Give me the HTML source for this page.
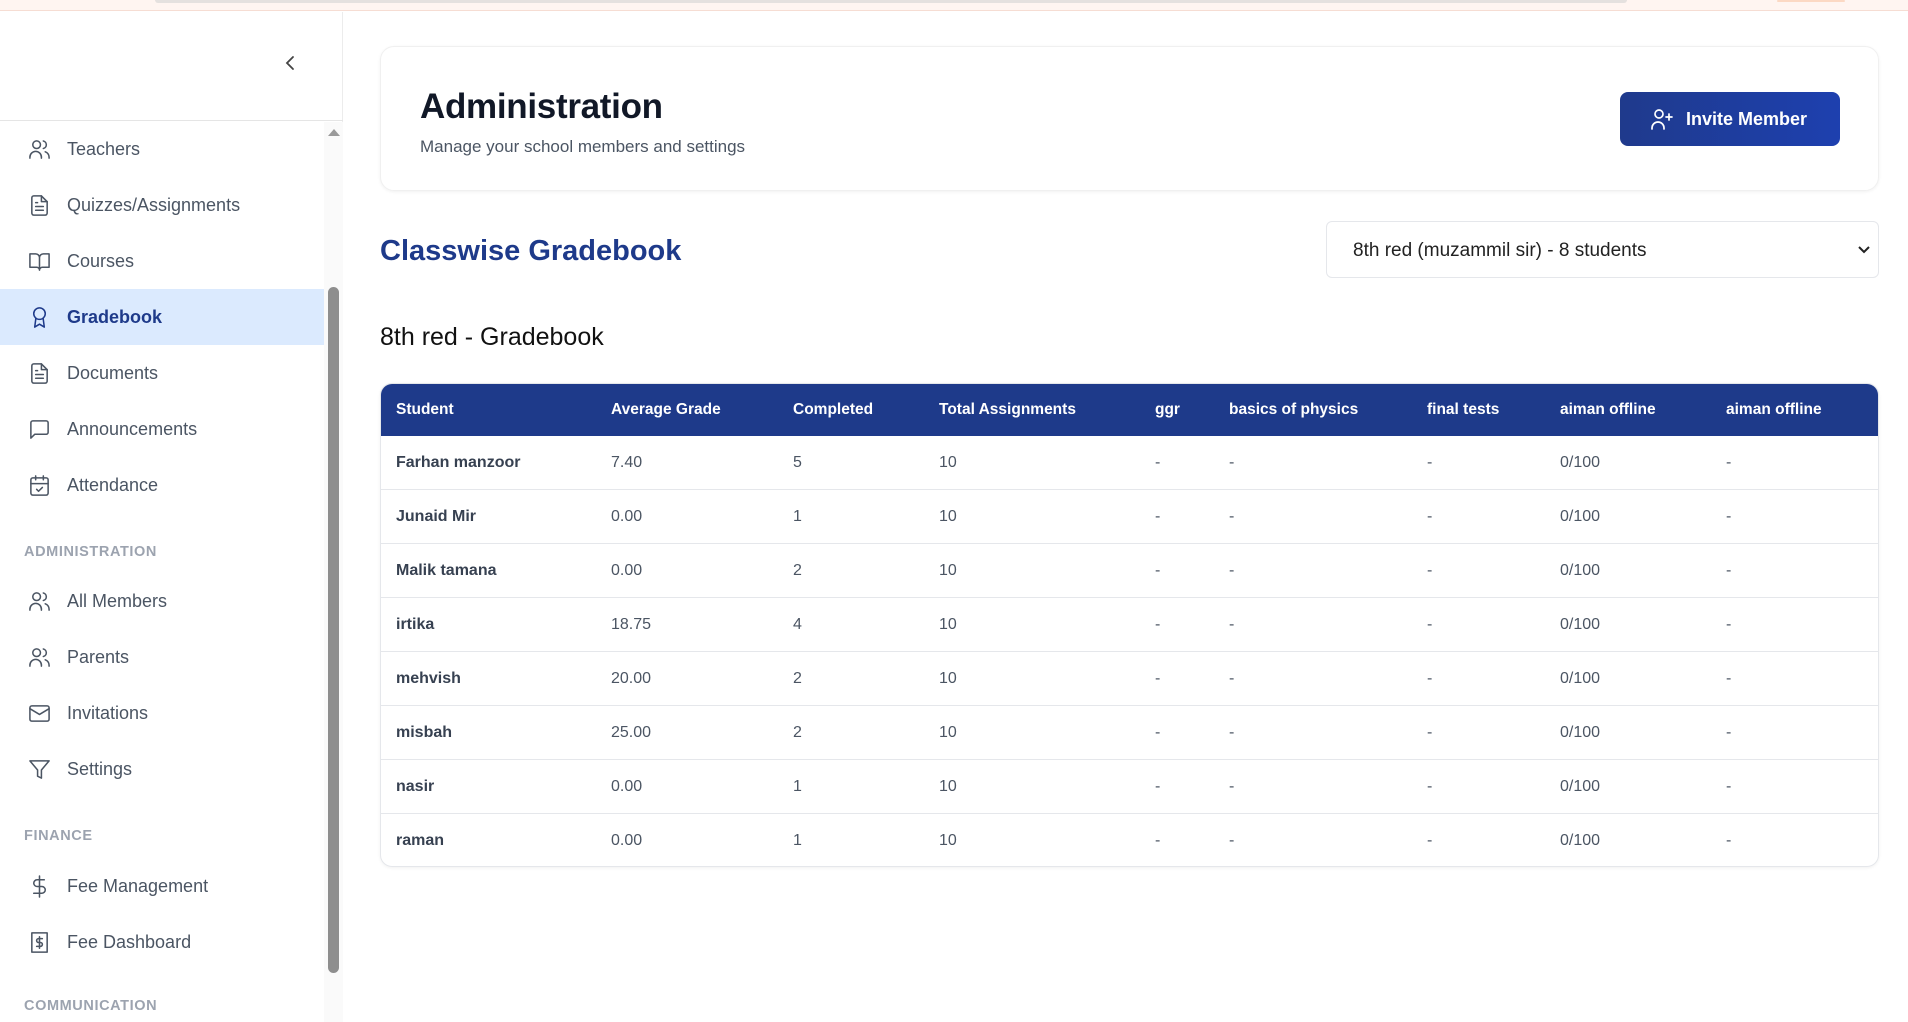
<!DOCTYPE html>
<html><head><meta charset="utf-8"><style>
*{box-sizing:border-box;margin:0;padding:0}
body{width:1908px;height:1012px;overflow:hidden;background:#fff;font-family:"Liberation Sans",sans-serif;position:relative}
.topbar{position:absolute;left:0;top:0;width:1908px;height:11px;background:#fff5f1;border-bottom:1px solid #f6ddd3}
.topbar .g{position:absolute;left:155px;top:0;width:1472px;height:3px;background:#e5e1df;border-radius:0 0 4px 4px}
.topbar .o{position:absolute;left:1777px;top:0;width:68px;height:2px;background:#fcd9c4;border-radius:2px}
.side{position:absolute;left:0;top:12px;width:343px;height:1000px;border-right:1px solid #ececec;background:#fff}
.side .hdr{position:absolute;left:0;top:0;width:343px;height:109px;border-bottom:1px solid #e5e5e5}
.side .strip{position:absolute;left:324px;top:110px;width:19px;height:900px;background:#fafafa}
.thumb{position:absolute;left:328px;top:275px;width:11px;height:686px;background:#8e8e8e;border-radius:6px}
.arrow{position:absolute;left:328px;top:117px;width:0;height:0;border-left:6px solid transparent;border-right:6px solid transparent;border-bottom:7px solid #9a9a9a}
.item{position:absolute;left:0;width:324px;height:56px;display:flex;align-items:center;color:#4b5563;font-size:18px}
.item svg{position:absolute;left:28px;width:23px;height:23px;fill:none;stroke:#4b5563;stroke-width:1.6;stroke-linecap:round;stroke-linejoin:round}
.item span{position:absolute;left:67px}
.item.act{background:#dbeafe;color:#1e3a8a}
.item.act svg{stroke:#1e3a8a}
.sec{position:absolute;left:24px;font-size:14.5px;font-weight:bold;color:#9ca3af;letter-spacing:0.6px}
.card{position:absolute;left:380px;top:46px;width:1499px;height:145px;border:1px solid #f0f0f0;border-radius:14px;box-shadow:0 1px 3px rgba(0,0,0,.06)}
.card h1{position:absolute;left:39px;top:40px;font-size:35px;font-weight:bold;color:#111827;letter-spacing:-0.3px}
.card p{position:absolute;left:39px;top:90px;font-size:17px;color:#4b5563}
.btn{position:absolute;left:1239px;top:45px;width:220px;height:54px;border-radius:8px;background:linear-gradient(90deg,#1f3a8c,#1e40af);color:#fff;font-size:18px;font-weight:bold}
.btn span{position:absolute;left:66px;top:17px}
.btn svg{position:absolute;left:30px;top:16px;width:24px;height:22px;fill:none;stroke:#fff;stroke-width:1.7;stroke-linecap:round}
h2{position:absolute;left:380px;top:235px;font-size:29px;font-weight:bold;color:#1e3a8a}
.sel{position:absolute;left:1326px;top:221px;width:553px;height:57px;border:1.5px solid #e5e7eb;border-radius:6px;font-size:19px;color:#222}
.sel span{position:absolute;left:26px;top:18px}
.sel svg{position:absolute;right:8px;top:23px;width:12px;height:10px;fill:none;stroke:#222;stroke-width:2}
h3{position:absolute;left:380px;top:323px;font-size:25px;font-weight:normal;color:#111}
.tbl{position:absolute;left:380px;top:383px;width:1499px;height:484px;border:1px solid #e5e7eb;border-radius:12px;overflow:hidden;box-shadow:0 1px 3px rgba(0,0,0,.06)}
.th{position:absolute;left:0;top:0;width:100%;height:52px;background:#1e3a8a}
.row{position:absolute;left:0;width:100%;height:54px;border-bottom:1px solid #e5e7eb}
.c{position:absolute;font-size:16px;top:0;line-height:52px;white-space:nowrap}
.th .c{color:#fff;font-weight:bold;font-size:15.5px}
.row .c{color:#4b5563;line-height:54px}
.row .c.n{font-weight:bold;color:#374151}
</style></head><body>
<div class="topbar"><div class="g"></div><div class="o"></div></div>
<div class="side">
<div class="hdr"><svg style="position:absolute;left:284px;top:43px" width="12" height="16" viewBox="0 0 12 16"><path d="M9 2L3 8l6 6" fill="none" stroke="#444" stroke-width="1.8" stroke-linecap="round"/></svg></div>
<div class="strip"></div><div class="arrow"></div><div class="thumb"></div>
</div>
<div class="item" style="top:121px"><svg viewBox="0 0 24 24"><circle cx="9" cy="7" r="4"/><path d="M2 21v-1a6 6 0 0 1 12 0v1M16 3.1a4 4 0 0 1 0 7.8M22 21v-1a6 6 0 0 0-4-5.6"/></svg><span>Teachers</span></div>
<div class="item" style="top:177px"><svg viewBox="0 0 24 24"><path d="M14 2H6a2 2 0 0 0-2 2v16a2 2 0 0 0 2 2h12a2 2 0 0 0 2-2V8z"/><path d="M14 2v6h6M8 13h8M8 17h8M8 9h2"/></svg><span>Quizzes/Assignments</span></div>
<div class="item" style="top:233px"><svg viewBox="0 0 24 24"><path d="M2 4h6a4 4 0 0 1 4 4v13a3 3 0 0 0-3-3H2zM22 4h-6a4 4 0 0 0-4 4v13a3 3 0 0 1 3-3h7z"/></svg><span>Courses</span></div>
<div class="item act" style="top:289px"><svg viewBox="0 0 24 24"><circle cx="12" cy="8" r="6"/><path d="M8.2 13L7 22l5-3 5 3-1.2-9"/></svg><span style="font-weight:bold">Gradebook</span></div>
<div class="item" style="top:345px"><svg viewBox="0 0 24 24"><path d="M14 2H6a2 2 0 0 0-2 2v16a2 2 0 0 0 2 2h12a2 2 0 0 0 2-2V8z"/><path d="M14 2v6h6M8 13h8M8 17h8M8 9h2"/></svg><span>Documents</span></div>
<div class="item" style="top:401px"><svg viewBox="0 0 24 24"><path d="M21 15a2 2 0 0 1-2 2H7l-4 4V5a2 2 0 0 1 2-2h14a2 2 0 0 1 2 2z"/></svg><span>Announcements</span></div>
<div class="item" style="top:457px"><svg viewBox="0 0 24 24"><rect x="3" y="4" width="18" height="18" rx="2"/><path d="M16 2v4M8 2v4M3 10h18M9 16l2 2 4-4"/></svg><span>Attendance</span></div>
<div class="sec" style="top:544px">ADMINISTRATION</div>
<div class="item" style="top:573px"><svg viewBox="0 0 24 24"><circle cx="9" cy="7" r="4"/><path d="M2 21v-1a6 6 0 0 1 12 0v1M16 3.1a4 4 0 0 1 0 7.8M22 21v-1a6 6 0 0 0-4-5.6"/></svg><span>All Members</span></div>
<div class="item" style="top:629px"><svg viewBox="0 0 24 24"><circle cx="9" cy="7" r="4"/><path d="M2 21v-1a6 6 0 0 1 12 0v1M16 3.1a4 4 0 0 1 0 7.8M22 21v-1a6 6 0 0 0-4-5.6"/></svg><span>Parents</span></div>
<div class="item" style="top:685px"><svg viewBox="0 0 24 24"><rect x="2" y="4" width="20" height="16" rx="2"/><path d="M22 7l-10 6L2 7"/></svg><span>Invitations</span></div>
<div class="item" style="top:741px"><svg viewBox="0 0 24 24"><path d="M22 3H2l8 9.5V19l4 2v-8.5z"/></svg><span>Settings</span></div>
<div class="sec" style="top:828px">FINANCE</div>
<div class="item" style="top:858px"><svg viewBox="0 0 24 24"><path d="M12 1v22M17 5H9.5a3.5 3.5 0 0 0 0 7h5a3.5 3.5 0 0 1 0 7H6"/></svg><span>Fee Management</span></div>
<div class="item" style="top:914px"><svg viewBox="0 0 24 24"><path d="M4 2h16v20H4z"/><path d="M15 8h-4a2 2 0 0 0 0 4h2a2 2 0 0 1 0 4H9M12 6v12"/></svg><span>Fee Dashboard</span></div>
<div class="sec" style="top:998px">COMMUNICATION</div>

<div class="card"><h1>Administration</h1><p>Manage your school members and settings</p>
<div class="btn"><svg viewBox="0 0 24 22"><circle cx="9" cy="6" r="4"/><path d="M2 21v-1a6 6 0 0 1 12 0v1M19 6v6M16 9h6"/></svg><span>Invite Member</span></div></div>
<h2>Classwise Gradebook</h2>
<div class="sel"><span>8th red (muzammil sir) - 8 students</span><svg viewBox="0 0 12 10"><path d="M1 2l5 5 5-5"/></svg></div>
<h3>8th red - Gradebook</h3>
<div class="tbl">
<div class="th"><div class="c" style="left:15px">Student</div><div class="c" style="left:230px">Average Grade</div><div class="c" style="left:412px">Completed</div><div class="c" style="left:558px">Total Assignments</div><div class="c" style="left:774px">ggr</div><div class="c" style="left:848px">basics of physics</div><div class="c" style="left:1046px">final tests</div><div class="c" style="left:1179px">aiman offline</div><div class="c" style="left:1345px">aiman offline</div></div>
<div class="row" style="top:52px"><div class="c n" style="left:15px">Farhan manzoor</div><div class="c" style="left:230px">7.40</div><div class="c" style="left:412px">5</div><div class="c" style="left:558px">10</div><div class="c" style="left:774px">-</div><div class="c" style="left:848px">-</div><div class="c" style="left:1046px">-</div><div class="c" style="left:1179px">0/100</div><div class="c" style="left:1345px">-</div></div>
<div class="row" style="top:106px"><div class="c n" style="left:15px">Junaid Mir</div><div class="c" style="left:230px">0.00</div><div class="c" style="left:412px">1</div><div class="c" style="left:558px">10</div><div class="c" style="left:774px">-</div><div class="c" style="left:848px">-</div><div class="c" style="left:1046px">-</div><div class="c" style="left:1179px">0/100</div><div class="c" style="left:1345px">-</div></div>
<div class="row" style="top:160px"><div class="c n" style="left:15px">Malik tamana</div><div class="c" style="left:230px">0.00</div><div class="c" style="left:412px">2</div><div class="c" style="left:558px">10</div><div class="c" style="left:774px">-</div><div class="c" style="left:848px">-</div><div class="c" style="left:1046px">-</div><div class="c" style="left:1179px">0/100</div><div class="c" style="left:1345px">-</div></div>
<div class="row" style="top:214px"><div class="c n" style="left:15px">irtika</div><div class="c" style="left:230px">18.75</div><div class="c" style="left:412px">4</div><div class="c" style="left:558px">10</div><div class="c" style="left:774px">-</div><div class="c" style="left:848px">-</div><div class="c" style="left:1046px">-</div><div class="c" style="left:1179px">0/100</div><div class="c" style="left:1345px">-</div></div>
<div class="row" style="top:268px"><div class="c n" style="left:15px">mehvish</div><div class="c" style="left:230px">20.00</div><div class="c" style="left:412px">2</div><div class="c" style="left:558px">10</div><div class="c" style="left:774px">-</div><div class="c" style="left:848px">-</div><div class="c" style="left:1046px">-</div><div class="c" style="left:1179px">0/100</div><div class="c" style="left:1345px">-</div></div>
<div class="row" style="top:322px"><div class="c n" style="left:15px">misbah</div><div class="c" style="left:230px">25.00</div><div class="c" style="left:412px">2</div><div class="c" style="left:558px">10</div><div class="c" style="left:774px">-</div><div class="c" style="left:848px">-</div><div class="c" style="left:1046px">-</div><div class="c" style="left:1179px">0/100</div><div class="c" style="left:1345px">-</div></div>
<div class="row" style="top:376px"><div class="c n" style="left:15px">nasir</div><div class="c" style="left:230px">0.00</div><div class="c" style="left:412px">1</div><div class="c" style="left:558px">10</div><div class="c" style="left:774px">-</div><div class="c" style="left:848px">-</div><div class="c" style="left:1046px">-</div><div class="c" style="left:1179px">0/100</div><div class="c" style="left:1345px">-</div></div>
<div class="row" style="top:430px;border-bottom:none"><div class="c n" style="left:15px">raman</div><div class="c" style="left:230px">0.00</div><div class="c" style="left:412px">1</div><div class="c" style="left:558px">10</div><div class="c" style="left:774px">-</div><div class="c" style="left:848px">-</div><div class="c" style="left:1046px">-</div><div class="c" style="left:1179px">0/100</div><div class="c" style="left:1345px">-</div></div>
</div>
</body></html>
